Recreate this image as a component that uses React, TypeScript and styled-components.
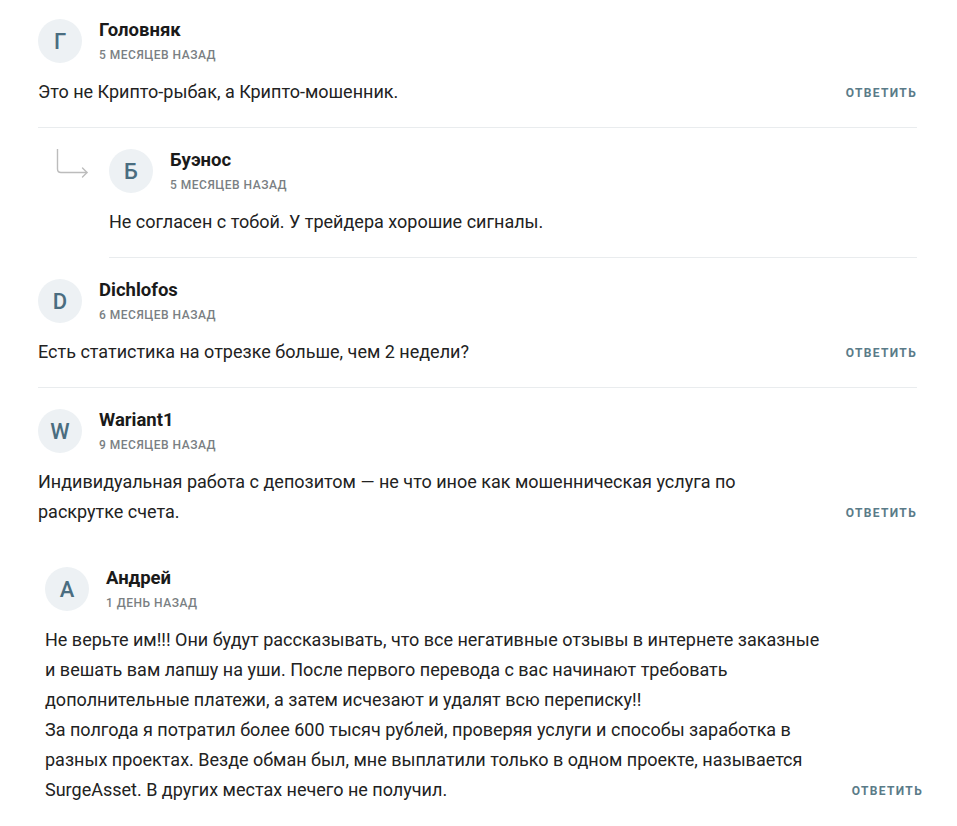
import React from 'react';
import styled, { createGlobalStyle } from 'styled-components';

const GlobalStyle = createGlobalStyle`
  body {
    margin: 0;
    background: #fff;
    font-family: Roboto, 'Liberation Sans', Arial, sans-serif;
    color: #222;
  }
`;

const Page = styled.div`
  width: 879px;
  padding: 19px 0 20px 38px;
`;

const CommentBox = styled.div<{ $divider: boolean; $shift?: number }>`
  padding-bottom: ${({ $divider }) => ($divider ? '20px' : '40px')};
  margin-bottom: ${({ $divider }) => ($divider ? '21px' : '0')};
  margin-left: ${({ $shift }) => ($shift ? `${$shift}px` : '0')};
  margin-right: ${({ $shift }) => ($shift ? `-${$shift - 1}px` : '0')};
  border-bottom: ${({ $divider }) => ($divider ? '1px solid #e9ecee' : 'none')};
`;

const Header = styled.div`
  display: flex;
  align-items: flex-start;
  gap: 17px;
`;

const Avatar = styled.div`
  flex: 0 0 44px;
  width: 44px;
  height: 44px;
  border-radius: 50%;
  background: #edf1f4;
  color: #4a6d80;
  display: flex;
  align-items: center;
  justify-content: center;
  font-size: 22px;
  font-weight: 500;
`;

const Meta = styled.div`
  display: flex;
  flex-direction: column;
`;

const Name = styled.div`
  font-size: 18.5px;
  font-weight: 700;
  line-height: 22px;
  color: #1a1a1a;
`;

const Date = styled.div`
  margin-top: 7px;
  font-size: 12px;
  font-weight: 500;
  line-height: 14px;
  letter-spacing: 0.5px;
  text-transform: uppercase;
  color: #7a7f83;
`;

const Body = styled.div`
  display: flex;
  justify-content: space-between;
  align-items: flex-end;
  margin-top: 14px;
`;

const Text = styled.p`
  margin: 0;
  max-width: 785px;
  font-size: 18px;
  line-height: 30px;
  color: #222;
`;

const Reply = styled.button`
  border: none;
  background: none;
  padding: 0;
  margin-bottom: 7px;
  font-family: inherit;
  font-size: 12px;
  font-weight: 700;
  letter-spacing: 1.35px;
  text-transform: uppercase;
  color: #5a7b88;
  cursor: pointer;
`;

const ReplyRow = styled.div`
  display: flex;
`;

const ArrowCol = styled.div`
  flex: 0 0 71px;
  padding: 0 0 0 18px;
  box-sizing: border-box;
`;

const ReplyBody = styled.div`
  flex: 1;
`;

const ReplyArrow = () => (
  <svg width="34" height="32" viewBox="0 0 34 32" fill="none">
    <path
      d="M1.5 0 V20 Q1.5 23.5 5 23.5 H31"
      stroke="#bcbcbc"
      strokeWidth="1.4"
      strokeLinecap="round"
    />
    <path d="M26.5 19 L31 23.5 L26.5 28" stroke="#bcbcbc" strokeWidth="1.4" strokeLinecap="round" strokeLinejoin="round" />
  </svg>
);

interface CommentProps {
  letter: string;
  name: string;
  date: string;
  children: React.ReactNode;
  reply?: boolean;
  divider?: boolean;
  shift?: number;
}

const Comment = ({ letter, name, date, children, reply = true, divider = true, shift }: CommentProps) => (
  <CommentBox $divider={divider} $shift={shift}>
    <Header>
      <Avatar>{letter}</Avatar>
      <Meta>
        <Name>{name}</Name>
        <Date>{date}</Date>
      </Meta>
    </Header>
    <Body>
      <Text>{children}</Text>
      {reply && <Reply>Ответить</Reply>}
    </Body>
  </CommentBox>
);

export default function App() {
  return (
    <>
      <GlobalStyle />
      <Page>
        <Comment letter="Г" name="Головняк" date="5 месяцев назад">
          Это не Крипто-рыбак, а Крипто-мошенник.
        </Comment>
        <ReplyRow>
          <ArrowCol>
            <ReplyArrow />
          </ArrowCol>
          <ReplyBody>
            <Comment letter="Б" name="Буэнос" date="5 месяцев назад" reply={false}>
              Не согласен с тобой. У трейдера хорошие сигналы.
            </Comment>
          </ReplyBody>
        </ReplyRow>
        <Comment letter="D" name="Dichlofos" date="6 месяцев назад">
          Есть статистика на отрезке больше, чем 2 недели?
        </Comment>
        <Comment letter="W" name="Wariant1" date="9 месяцев назад" divider={false}>
          Индивидуальная работа с депозитом — не что иное как мошенническая услуга по раскрутке счета.
        </Comment>
        <Comment letter="А" name="Андрей" date="1 день назад" divider={false} shift={7}>
          Не верьте им!!! Они будут рассказывать, что все негативные отзывы в интернете заказные и
          вешать вам лапшу на уши. После первого перевода с вас начинают требовать дополнительные
          платежи, а затем исчезают и удалят всю переписку!!
          <br />
          За полгода я потратил более 600 тысяч рублей, проверяя услуги и способы заработка в разных
          проектах. Везде обман был, мне выплатили только в одном проекте, называется SurgeAsset. В
          других местах нечего не получил.
        </Comment>
      </Page>
    </>
  );
}
